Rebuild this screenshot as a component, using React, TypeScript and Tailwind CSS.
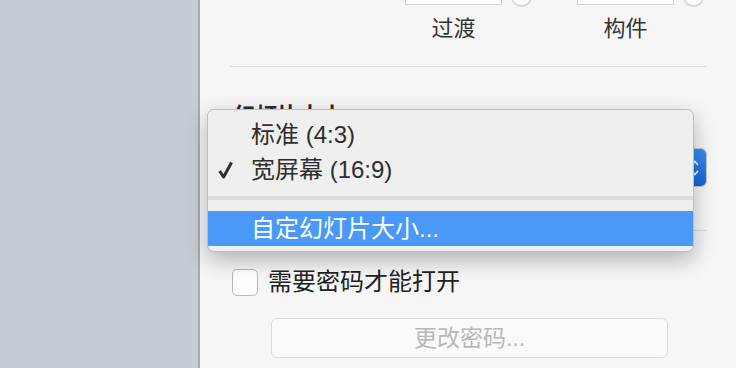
import React from "react";

const font = { fontFamily: '"Liberation Sans", "Noto Sans CJK SC", sans-serif' };

function Thumb({ label }: { label: string }) {
	return (
		<div className="flex flex-col items-center w-[97px]">
			<div className="relative w-[97px] h-[60px] bg-white border border-[#d2d2d2]">
				<div className="absolute -right-[31px] -bottom-[2px] w-[21px] h-[21px] rounded-full bg-white border border-[#cfcfcf] shadow-[0_1px_1px_rgba(0,0,0,0.12)]" />
			</div>
			<span className="mt-[10px] text-[22px] leading-[28px] text-[#333]">{label}</span>
		</div>
	);
}

function SlideSizeMenu() {
	return (
		<div className="absolute left-[7px] top-[109px] w-[487px] h-[143px] rounded-[7px] bg-[#efefef] border border-[#bdbdbd] shadow-[0_8px_22px_rgba(0,0,0,0.28)] flex flex-col pt-[7px] overflow-hidden">
			<div className="h-[35px] flex items-center pl-[43px] text-[24px] text-[#2e2e2e]">标准 (4:3)</div>
			<div className="relative h-[35px] flex items-center pl-[43px] text-[24px] text-[#2e2e2e]">
				<svg className="absolute left-[10px] top-[9px]" width="15" height="18" viewBox="0 0 15 18">
					<path d="M1.6 10 L5.6 16 L13.5 1.5" fill="none" stroke="#2e2e2e" strokeWidth="3" strokeLinejoin="round" />
				</svg>
				宽屏幕 (16:9)
			</div>
			<div className="mt-[9px] h-[4px] bg-[#dcdcdc]" />
			<div className="mt-[11px] h-[35px] bg-[#4a99f9] flex items-center pl-[43px] text-[24px] text-white">
				自定幻灯片大小...
			</div>
		</div>
	);
}

export default function App() {
	return (
		<div className="w-[736px] h-[368px] flex overflow-hidden" style={font}>
			<div className="w-[200px] shrink-0 bg-[#c4ccd4] border-r-2 border-[#a9abae]" />
			<div className="relative flex-1 bg-[#f6f6f6] flex flex-col pl-[30px] pr-[29px]">
				<div className="flex pl-[175px] gap-[75px] -mt-[55px]">
					<Thumb label="过渡" />
					<Thumb label="构件" />
				</div>
				<div className="mt-[23px] h-px bg-[#dadada]" />
				<div className="mt-[35px] pl-[3px] text-[22px] leading-[28px] font-bold text-[#2a2a2a]">幻灯片大小</div>
				<div className="mt-[18px] flex justify-end">
					<div className="flex h-[39px] w-[300px] rounded-[6px] overflow-hidden border border-[#c8c8c8] bg-white">
						<div className="flex-1" />
						<div className="w-[22px] bg-gradient-to-b from-[#3b8df5] to-[#1565dc] flex items-center justify-center">
							<svg width="10" height="20" viewBox="0 0 10 20">
								<path d="M2 7 L5 3.5 L8 7 M2 13 L5 16.5 L8 13" fill="none" stroke="white" strokeWidth="1.6" />
							</svg>
						</div>
					</div>
				</div>
				<div className="mt-[43px] h-px bg-[#dadada]" />
				<div className="mt-[37px] flex items-center ml-[2px]">
					<div className="w-[26px] h-[27px] rounded-[5px] bg-white border border-[#b8b8b8]" />
					<span className="ml-[10px] text-[24px] leading-[28px] text-[#222]">需要密码才能打开</span>
				</div>
				<div className="mt-[22px] ml-[41px] w-[397px] h-[40px] rounded-[6px] border border-[#dcdcdc] bg-[#fafafa] flex items-center justify-center text-[23px] text-[#b8b8b8]">
					更改密码...
				</div>
				<SlideSizeMenu />
			</div>
		</div>
	);
}
